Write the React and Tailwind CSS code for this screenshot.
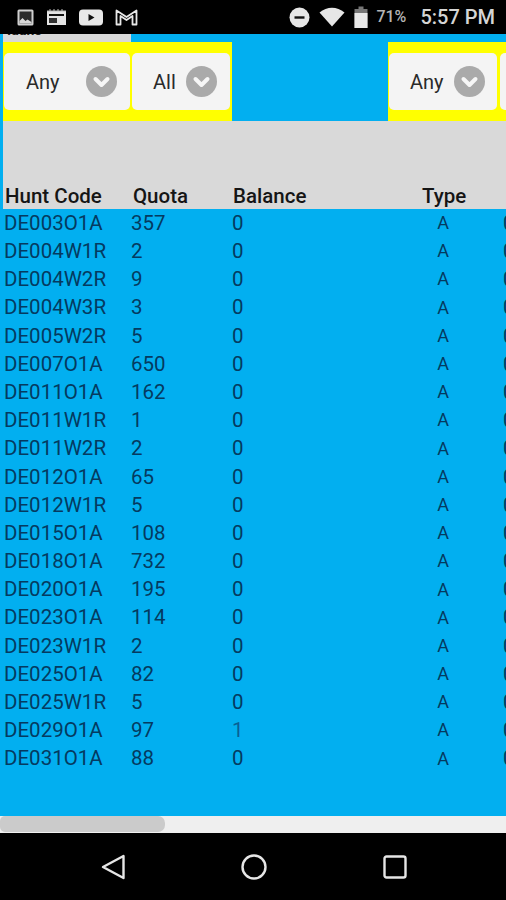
const rows = [
  ["DE003O1A", "357", "0"], ["DE004W1R", "2", "0"], ["DE004W2R", "9", "0"], ["DE004W3R", "3", "0"],
  ["DE005W2R", "5", "0"], ["DE007O1A", "650", "0"], ["DE011O1A", "162", "0"], ["DE011W1R", "1", "0"],
  ["DE011W2R", "2", "0"], ["DE012O1A", "65", "0"], ["DE012W1R", "5", "0"], ["DE015O1A", "108", "0"],
  ["DE018O1A", "732", "0"], ["DE020O1A", "195", "0"], ["DE023O1A", "114", "0"], ["DE023W1R", "2", "0"],
  ["DE025O1A", "82", "0"], ["DE025W1R", "5", "0"], ["DE029O1A", "97", "1"], ["DE031O1A", "88", "0"],
];

function Select({ label, width, textPad, gap }) {
  return (
    <div className="h-[57px] shrink-0 rounded-[5px] bg-[#f4f4f4] flex items-center" style={{ width }}>
      <span className="text-[20px] text-[#2a2a2a] leading-none" style={{ paddingLeft: textPad, width: gap }}>{label}</span>
      <span className="size-[31px] rounded-full bg-[#aaaaaa] flex items-center justify-center shrink-0">
        <svg width="21" height="21" viewBox="0 0 21 21" fill="none" stroke="#f6f6f6" strokeWidth="4" strokeLinecap="round" strokeLinejoin="round">
          <path d="M4.500 8l6 6 6-6" />
        </svg>
      </span>
    </div>
  );
}

function Status() {
  return (
    <div className="h-[34px] bg-black flex items-center justify-between pl-[17px] pr-[11px] shrink-0">
      <div className="flex items-center gap-[12px]">
        <svg width="17" height="17" viewBox="0 0 17 17"><rect x="0.500" y="0.500" width="16" height="16" rx="1.500" fill="#cfcfcf" /><rect x="2.500" y="2.500" width="12" height="12" fill="#2a2a2a" /><path d="M2.500 14.500v-2.500l3-3 3 3 2-1.500 4 2.500v1.500z" fill="#d8d8d8" /></svg>
        <svg width="21" height="18" viewBox="0 0 21 18"><path d="M1 3h19v14H1z" fill="#e4e4e4" /><path d="M1 3h19M4 1v2M8 1v2M12 1v2M16 1v2" stroke="#bbb" strokeWidth="1" /><rect x="3" y="6" width="15" height="2" fill="#111" /><rect x="3" y="10" width="8" height="5" fill="#333" /></svg>
        <svg width="24" height="17" viewBox="0 0 24 17"><rect x="0" y="0.500" width="24" height="16" rx="4" fill="#e8e8e8" /><path d="M9.500 5l6 3.500-6 3.500z" fill="#111" /></svg>
        <svg width="23" height="17" viewBox="0 0 23 17" fill="none" stroke="#e8e8e8" strokeWidth="1.800" strokeLinejoin="round"><path d="M1.500 15.500V1.500L11.500 8l10-6.500V15.500h-4V7L11.500 11 5.500 7V15.500z" /></svg>
      </div>
      <div className="flex items-center">
        <svg width="21" height="21" viewBox="0 0 21 21"><circle cx="10.500" cy="10.500" r="10" fill="#e6e6e6" /><rect x="5.500" y="9.300" width="10" height="2.400" fill="#111" /></svg>
        <svg className="ml-[9px]" width="26" height="20" viewBox="0 0 26 20"><path d="M0.500 5.500C8 -1 18 -1 25.500 5.500L13 19.500z" fill="#e6e6e6" /></svg>
        <svg className="ml-[9px]" width="14" height="22" viewBox="0 0 14 22"><path d="M4.500 0.500h5V3h4v19H0.500V3h4z" fill="#777" /><rect x="0.500" y="7" width="13" height="15" fill="#e8e8e8" /></svg>
        <span className="ml-[8px] text-[16px] font-medium text-[#b5b5b5] leading-none w-[33px]">71%</span>
        <span className="ml-[11px] text-[20px] font-medium text-[#d5d5d5] leading-none">5:57 PM</span>
      </div>
    </div>
  );
}

export default function App() {
  return (
    <div className="w-[506px] h-[900px] overflow-hidden flex flex-col bg-black font-['Roboto',sans-serif]">
      <Status />
      <div className="flex-1 min-h-0 bg-[#02aff0] overflow-hidden flex flex-col">
        <div className="h-[8px] w-[128px] ml-[3px] bg-[#d8d8d8] overflow-hidden shrink-0">
          <div className="text-[14px] font-bold text-[#222] leading-none pl-[4px] -mt-[12px] pt-[1px]">Idaho</div>
        </div>
        <div className="h-[79px] flex shrink-0 w-[506px]">
          <div className="w-[229px] ml-[3px] bg-[#ffff00] flex items-center gap-[2px] pl-[1px] shrink-0">
            <Select label="Any" width={126} textPad={22} gap={82} />
            <Select label="All" width={98} textPad={21} gap={54} />
          </div>
          <div className="w-[118px] ml-[156px] bg-[#ffff00] flex items-center gap-[3px] pl-[1px] shrink-0">
            <Select label="Any" width={108} textPad={21} gap={65} />
            <div className="h-[57px] w-[30px] rounded-[5px] bg-[#f4f4f4] shrink-0" />
          </div>
        </div>
        <div className="h-[88px] bg-[#d9d9d9] flex items-end shrink-0 text-[20.5px] font-medium text-[#151515] leading-[26px] ml-[3px]">
          <div className="w-[130px] pl-[2px] shrink-0">Hunt Code</div>
          <div className="w-[100px] shrink-0">Quota</div>
          <div className="w-[189px] shrink-0">Balance</div>
          <div>Type</div>
        </div>
        <div className="text-[20.5px] text-[#053a60]">
          {rows.map(([code, quota, balance]) => (
            <div key={code} className="h-[28.2px] flex items-center leading-none w-[560px]">
              <div className="w-[131px] pl-[4px] shrink-0">{code}</div>
              <div className="w-[101px] shrink-0">{quota}</div>
              <div className={`w-[190px] shrink-0 ${balance === "1" ? "text-[#0a5f95]" : ""}`}>{balance}</div>
              <div className="w-[42px] text-center text-[18px] shrink-0">A</div>
              <div className="pl-[39px] shrink-0">0</div>
            </div>
          ))}
        </div>
        <div className="flex-1" />
        <div className="h-[17px] bg-[#efefef] shrink-0">
          <div className="h-[16px] w-[165px] rounded-r-[7px] rounded-l-[5px] bg-[#cbcbcb]" />
        </div>
      </div>
      <div className="h-[67px] bg-black flex items-center justify-center gap-[116px] shrink-0 pl-[2px]">
        <svg width="24" height="26" viewBox="0 0 24 26" fill="none" stroke="#e6e6e6" strokeWidth="2.400" strokeLinejoin="round"><path d="M22.500 2v22L2 13z" /></svg>
        <svg width="26" height="26" viewBox="0 0 26 26" fill="none" stroke="#e6e6e6" strokeWidth="2.400"><circle cx="13" cy="13" r="11.500" /></svg>
        <svg width="24" height="24" viewBox="0 0 24 24" fill="none" stroke="#e6e6e6" strokeWidth="2.400"><rect x="1.500" y="1.500" width="21" height="21" rx="2" /></svg>
      </div>
    </div>
  );
}
